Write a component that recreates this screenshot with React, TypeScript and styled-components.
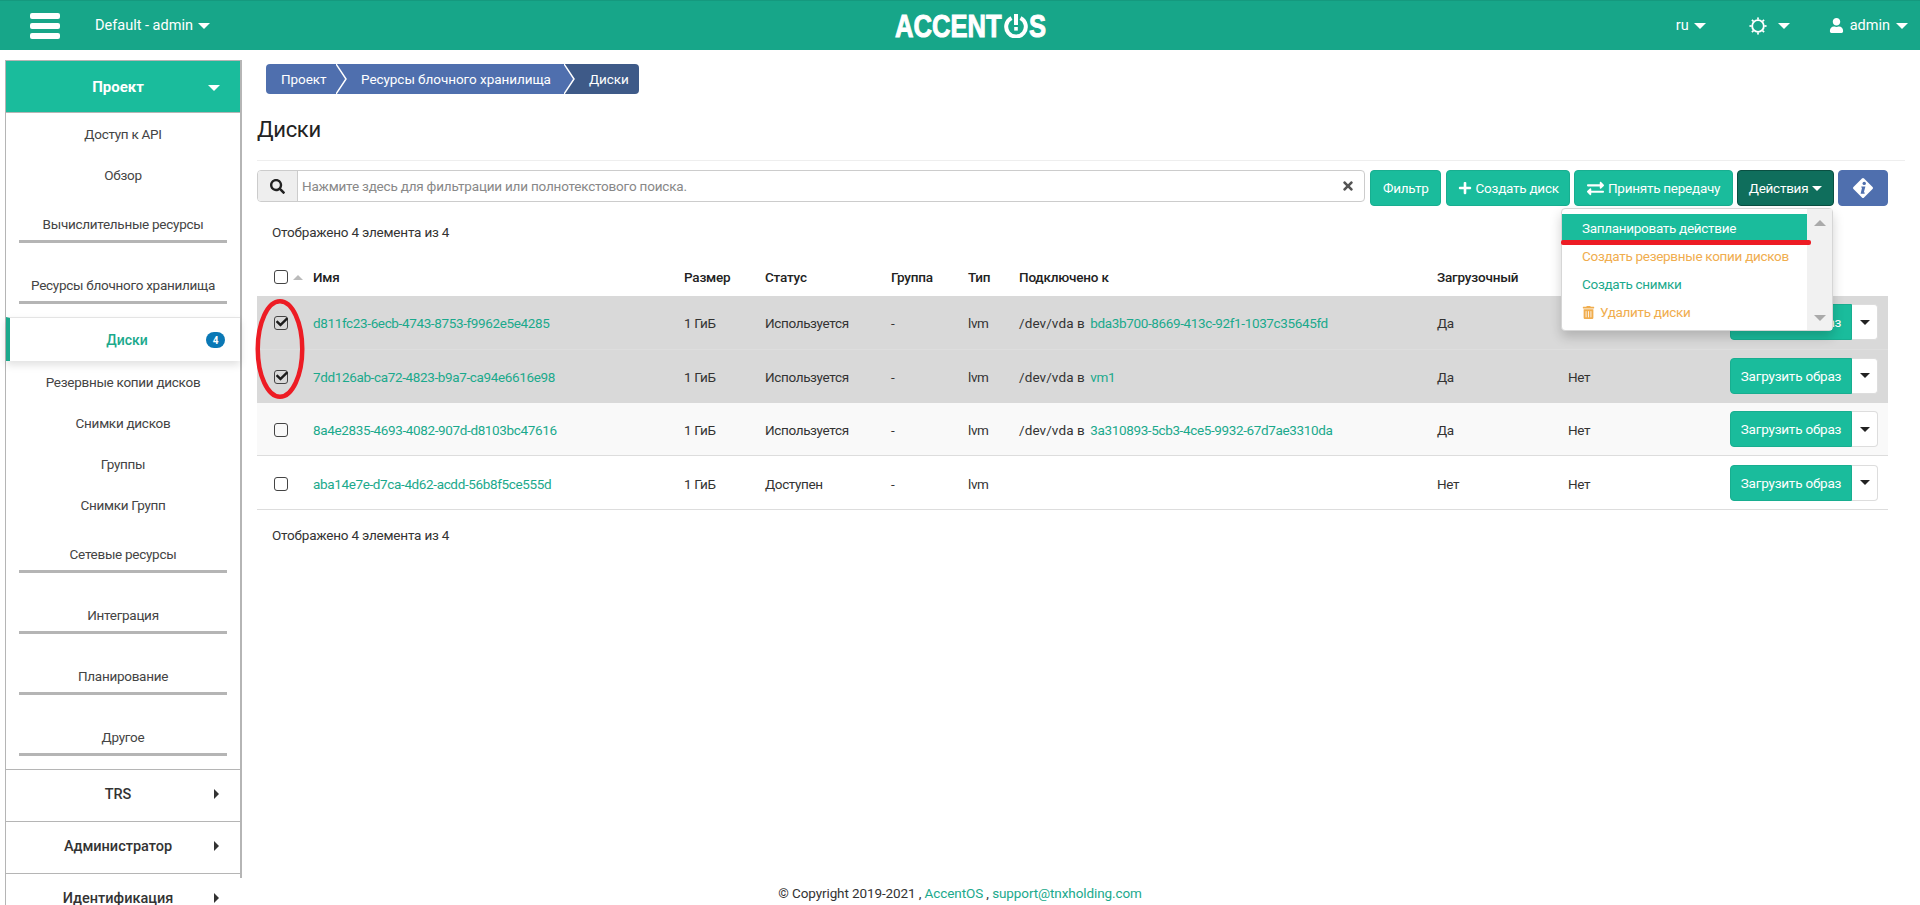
import React from "react";
import styled, { createGlobalStyle } from "styled-components";
import { FaSearch, FaTimes, FaPlus, FaExchangeAlt, FaTrashAlt, FaUser, FaCheck } from "react-icons/fa";

const GlobalStyle = createGlobalStyle`
  html, body {
    margin: 0;
    padding: 0;
    background: #fff;
  }
  body {
    font-family: Roboto, "Noto Sans", "Liberation Sans", sans-serif;
    font-size: 13.5px;
    letter-spacing: -0.2px;
    color: #333;
  }
  * {
    box-sizing: border-box;
  }
`;

const GREEN = "#1abc9c";
const HEADER_GREEN = "#17a689";
const LINK = "#1ba98c";

// --- шапка ---
const Page = styled.div`
  position: relative;
  width: 1920px;
  height: 905px;
  overflow: hidden;
  white-space: nowrap;
`;

const Topbar = styled.header`
  display: grid;
  grid-template-columns: 1fr auto 1fr;
  align-items: center;
  height: 50px;
  background: ${HEADER_GREEN};
  border-top: 1px solid #15997e;
  color: #fff;
`;

const TopLeft = styled.div`
  display: flex;
  align-items: center;
  padding-left: 30px;
  gap: 35px;
`;

const Burger = styled.div`
  display: flex;
  flex-direction: column;
  gap: 4px;
  width: 30px;
`;

const BurgerBar = styled.span`
  display: block;
  height: 6px;
  background: #fff;
  border-radius: 2px;
`;

const TopLink = styled.span`
  display: inline-flex;
  align-items: center;
  gap: 5px;
  font-size: 14.5px;
  letter-spacing: 0;
  color: #fff;
`;

const Caret = styled.span<{ $color?: string; $size?: number }>`
  display: inline-block;
  width: 0;
  height: 0;
  border-left: ${(p) => p.$size ?? 5}px solid transparent;
  border-right: ${(p) => p.$size ?? 5}px solid transparent;
  border-top: ${(p) => p.$size ?? 5}px solid ${(p) => p.$color ?? "#fff"};
`;

const Logo = styled.div`
  display: flex;
  align-items: center;
  width: 150px;
  margin-left: 20px;
  height: 24px;
`;

const LogoText = styled.span<{ $w: number }>`
  display: inline-block;
  flex: none;
  width: ${(p) => p.$w}px;
  font-family: "Liberation Sans", sans-serif;
  font-weight: 700;
  font-size: 32px;
  line-height: 24px;
  letter-spacing: 0;
  color: #fff;
  -webkit-text-stroke: 1px #fff;
  transform: scaleX(0.8);
  transform-origin: left center;
`;

const LogoRing = styled.span`
  display: inline-flex;
  justify-content: center;
  flex: none;
  width: 27px;
`;

const TopRight = styled.div`
  display: flex;
  align-items: center;
  justify-content: flex-end;
  padding-right: 12px;
`;

const TopRightItem = styled(TopLink)<{ $ml: number; $gap?: number }>`
  margin-left: ${(p) => p.$ml}px;
  gap: ${(p) => p.$gap ?? 5}px;
`;

// --- боковое меню ---
const Body = styled.div`
  display: flex;
  align-items: flex-start;
  padding-left: 5px;
`;

const Sidebar = styled.nav`
  flex: none;
  width: 237px;
  height: 818px;
  margin-top: 10px;
  border-right: 2px solid #b5b5b5;
`;

const SideInner = styled.div`
  width: 235px;
  border-left: 1px solid #b5b5b5;
  border-top: 1px solid #b5b5b5;
`;

const ProjectHead = styled.div`
  position: relative;
  display: flex;
  align-items: center;
  justify-content: center;
  height: 52px;
  padding-right: 10px;
  background: ${GREEN};
  border-bottom: 1px solid #b5b5b5;
  font-size: 15px;
  font-weight: 700;
  letter-spacing: 0;
  color: #fff;
`;

const HeadCaret = styled.span`
  position: absolute;
  right: 20px;
  top: 24px;
  line-height: 0;
`;

const SideItem = styled.div`
  display: flex;
  align-items: center;
  justify-content: center;
  height: 41px;
  letter-spacing: -0.28px;
  color: #444;
`;

const SideGroup = styled.div`
  height: 61px;
  padding: 19px 13px 0;
`;

const SideGroupLabel = styled.div`
  height: 29px;
  border-bottom: 3px solid #b5b5b5;
  text-align: center;
  letter-spacing: -0.28px;
  line-height: 20px;
  color: #444;
`;

const ActiveItem = styled.div`
  position: relative;
  display: flex;
  align-items: center;
  justify-content: center;
  height: 44px;
  padding-left: 4px;
  border-top: 1px solid #e4e4e4;
  border-left: 4px solid ${LINK};
  box-shadow: 0 4px 8px rgba(0, 0, 0, 0.12);
  font-size: 14px;
  font-weight: 500;
  letter-spacing: 0;
  color: ${LINK};
`;

const Badge = styled.span`
  position: absolute;
  right: 15px;
  top: 14px;
  display: flex;
  align-items: center;
  justify-content: center;
  width: 19px;
  height: 16px;
  border-radius: 8px;
  background: #0a78b5;
  color: #fff;
  font-size: 10px;
  font-weight: 700;
`;

const AccordionRow = styled.div`
  position: relative;
  display: flex;
  align-items: center;
  justify-content: center;
  height: 52px;
  padding: 0 10px 2px 0;
  border-top: 1px solid #b5b5b5;
  font-size: 14.5px;
  font-weight: 500;
  letter-spacing: 0;
  color: #333;
`;

const RowArrow = styled.span`
  position: absolute;
  right: 21px;
  top: 19px;
  width: 0;
  height: 0;
  border-top: 5px solid transparent;
  border-bottom: 5px solid transparent;
  border-left: 5px solid #333;
`;

// --- основная часть ---
const Main = styled.main`
  flex: 1;
  min-width: 0;
  padding: 14px 15px 0;
`;

const Crumbs = styled.div`
  display: flex;
  height: 30px;
  margin-left: 9px;
`;

const Crumb = styled.div<{ $w: number; $dark?: boolean; $first?: boolean }>`
  position: relative;
  display: flex;
  align-items: center;
  width: ${(p) => p.$w}px;
  padding-left: ${(p) => (p.$first ? 15 : 24)}px;
  background: ${(p) => (p.$dark ? "#3e5a88" : "#4f6fae")};
  border-radius: ${(p) => (p.$first ? "4px 0 0 4px" : p.$dark ? "0 4px 4px 0" : "0")};
  letter-spacing: -0.05px;
  color: #fff;
`;

const CrumbArrow = styled.svg`
  position: absolute;
  right: -10px;
  top: 0;
  z-index: 1;
`;

const PageTitle = styled.h1`
  margin: 0;
  height: 67px;
  padding-top: 20px;
  border-bottom: 1px solid #eee;
  font-size: 22px;
  font-weight: 400;
  letter-spacing: -0.3px;
  line-height: 32px;
  color: #222;
`;

const Toolbar = styled.div`
  display: flex;
  align-items: flex-start;
  width: 1631px;
  margin-top: 9px;
`;

const SearchBox = styled.div`
  display: flex;
  width: 1109px;
  height: 32px;
  border: 1px solid #ccc;
  border-radius: 4px;
  overflow: hidden;
`;

const SearchAddon = styled.span`
  display: flex;
  align-items: center;
  justify-content: center;
  flex: none;
  width: 40px;
  background: #eee;
  border-right: 1px solid #ccc;
  color: #222;
  font-size: 15px;
`;

const SearchInput = styled.input`
  flex: 1;
  min-width: 0;
  border: 0;
  outline: 0;
  padding: 0 4px;
  font-family: inherit;
  font-size: 13.5px;
  letter-spacing: -0.2px;
  &::placeholder {
    color: #888;
    opacity: 1;
  }
`;

const SearchClear = styled.span`
  display: flex;
  align-items: center;
  padding-right: 9px;
  color: #555;
  font-size: 14px;
`;

const Btn = styled.button<{ $w: number; $ml: number; $bg?: string; $border?: string }>`
  display: inline-flex;
  align-items: center;
  justify-content: center;
  gap: 4px;
  width: ${(p) => p.$w}px;
  height: 36px;
  margin-left: ${(p) => p.$ml}px;
  padding: 0;
  background: ${(p) => p.$bg ?? GREEN};
  border: 1px solid ${(p) => p.$border ?? "#18ae90"};
  border-radius: 4px;
  font-family: inherit;
  font-size: 13.5px;
  letter-spacing: -0.25px;
  color: #fff;
`;

const ActionsWrap = styled.div`
  position: relative;
`;

const Dropdown = styled.div`
  position: absolute;
  left: -172px;
  top: 38px;
  z-index: 5;
  display: flex;
  width: 272px;
  height: 123px;
  padding-top: 5px;
  background: #fff;
  border: 1px solid #d6d6d6;
  border-radius: 4px;
  box-shadow: 0 6px 12px rgba(0, 0, 0, 0.18);
`;

const DropList = styled.div`
  flex: 1;
  min-width: 0;
`;

const DropItem = styled.div<{ $color: string; $bg?: string }>`
  display: flex;
  align-items: center;
  gap: 5px;
  height: 28px;
  padding-left: 20px;
  background: ${(p) => p.$bg ?? "transparent"};
  letter-spacing: -0.3px;
  color: ${(p) => p.$color};
`;

const DropScroll = styled.div`
  display: flex;
  flex-direction: column;
  justify-content: space-between;
  align-items: center;
  flex: none;
  width: 25px;
  margin-top: -5px;
  padding: 11px 0 9px;
  background: #f1f1f1;
`;

const ScrollArrow = styled.span<{ $up?: boolean }>`
  width: 0;
  height: 0;
  border-left: 6px solid transparent;
  border-right: 6px solid transparent;
  ${(p) => (p.$up ? "border-bottom: 6px solid #aaa;" : "border-top: 6px solid #aaa;")}
`;

const RedMark = styled.span`
  position: absolute;
  left: -1px;
  top: 31px;
  width: 250px;
  height: 5px;
  border-radius: 2px;
  background: #ed1c24;
`;

const CountText = styled.div<{ $mt: number }>`
  margin: ${(p) => p.$mt}px 0 0 15px;
  line-height: 18px;
  color: #333;
`;

const TableWrap = styled.div`
  position: relative;
  width: 1631px;
  margin-top: 20px;
`;

const Table = styled.table`
  width: 1631px;
  border-collapse: collapse;
  table-layout: fixed;
`;

const Th = styled.th`
  height: 35px;
  padding: 0 8px 3px;
  text-align: left;
  font-size: 13.5px;
  font-weight: 500;
  color: #222;
`;

const Tr = styled.tr<{ $bg: string; $line: string }>`
  height: 53.3px;
  background: ${(p) => p.$bg};
  border-bottom: 1px solid ${(p) => p.$line};
`;

const Td = styled.td`
  padding: 2px 8px 0;
  letter-spacing: -0.35px;
  color: #333;
`;

const ActionTd = styled(Td)`
  padding: 0 10px 0 8px;
  letter-spacing: -0.2px;
`;

const DevicePath = styled.span`
  letter-spacing: 0.1px;
  margin-right: 2px;
`;

const RowLink = styled.a`
  color: ${LINK};
  letter-spacing: -0.36px;
  text-decoration: none;
`;

const FooterLink = styled.a`
  color: ${LINK};
  text-decoration: none;
`;

const CheckCell = styled.div`
  display: flex;
  align-items: center;
  gap: 5px;
  padding-left: 9px;
`;

const CheckBox = styled.span`
  position: relative;
  display: block;
  flex: none;
  width: 14px;
  height: 14px;
  border: 1.5px solid #444;
  border-radius: 3px;
`;

const CheckMark = styled.span`
  position: absolute;
  left: 1px;
  top: -1px;
  color: #1c1c1c;
  font-size: 12px;
  & svg {
    display: block;
  }
`;

const SortUp = styled.span`
  width: 0;
  height: 0;
  border-left: 5px solid transparent;
  border-right: 5px solid transparent;
  border-bottom: 5px solid #bbb;
`;

const ButtonGroup = styled.div`
  display: flex;
  justify-content: flex-end;
`;

const LoadBtn = styled.span`
  display: flex;
  align-items: center;
  justify-content: center;
  width: 122px;
  height: 36px;
  background: ${GREEN};
  border: 1px solid #18ae90;
  border-radius: 4px 0 0 4px;
  color: #fff;
`;

const LoadCaret = styled.span`
  display: flex;
  align-items: center;
  justify-content: center;
  width: 26px;
  height: 36px;
  background: #fff;
  border: 1px solid #ddd;
  border-left: 0;
  border-radius: 0 4px 4px 0;
`;

const Ellipse = styled.svg`
  position: absolute;
  left: -4px;
  top: 36px;
`;

const Footer = styled.footer`
  position: absolute;
  left: 0;
  right: 0;
  bottom: 2px;
  text-align: center;
  letter-spacing: -0.1px;
  line-height: 20px;
  color: #333;
`;

interface Disk {
  id: string;
  status: string;
  device?: string;
  host?: string;
  boot: string;
  selected?: boolean;
  bg: string;
  line: string;
}

const DISKS: Disk[] = [
  { id: "d811fc23-6ecb-4743-8753-f9962e5e4285", status: "Используется", device: "/dev/vda в ", host: "bda3b700-8669-413c-92f1-1037c35645fd", boot: "Да", selected: true, bg: "#d9d9d9", line: "#dedede" },
  { id: "7dd126ab-ca72-4823-b9a7-ca94e6616e98", status: "Используется", device: "/dev/vda в ", host: "vm1", boot: "Да", selected: true, bg: "#d9d9d9", line: "#d9d9d9" },
  { id: "8a4e2835-4693-4082-907d-d8103bc47616", status: "Используется", device: "/dev/vda в ", host: "3a310893-5cb3-4ce5-9932-67d7ae3310da", boot: "Да", bg: "#f9f9f9", line: "#ddd" },
  { id: "aba14e7e-d7ca-4d62-acdd-56b8f5ce555d", status: "Доступен", boot: "Нет", bg: "#fff", line: "#ddd" },
];

const COLUMNS = [48, 371, 81, 126, 77, 51, 418, 131, 130, 198];

const Check: React.FC<{ checked?: boolean }> = ({ checked }) => (
  <CheckBox>
    {checked && (
      <CheckMark>
        <FaCheck />
      </CheckMark>
    )}
  </CheckBox>
);

const Gear = () => (
  <svg width="18" height="18" viewBox="0 0 21 21" fill="none">
    <circle cx="10.5" cy="10.5" r="6.8" stroke="#fff" strokeWidth="2.2" />
    {[0, 45, 90, 135, 180, 225, 270, 315].map((a) => (
      <rect key={a} x="9.5" y="0.5" width="2" height="2.5" fill="#fff" transform={`rotate(${a} 10.5 10.5)`} />
    ))}
  </svg>
);

const InfoDiamond = () => (
  <svg width="24" height="24" viewBox="0 0 24 24">
    <rect x="4.5" y="4.5" width="15" height="15" rx="1.5" fill="#fff" transform="rotate(45 12 12)" />
    <circle cx="13.2" cy="7.4" r="1.7" fill="#4f6fae" />
    <path d="M10.4 10.4h4l-1.6 6.2h1.1l-.4 1.2h-3.9l1.5-6.2h-1z" fill="#4f6fae" />
  </svg>
);

const PowerO = () => (
  <svg width="26" height="24" viewBox="0 0 26 24" fill="none">
    <path d="M8.5 4a9.8 9.8 0 1 0 9 0" stroke="#fff" strokeWidth="4" />
    <rect x="11" y="0" width="4" height="11" fill="#fff" />
    <rect x="11.2" y="13" width="3.6" height="3.6" fill="#fff" />
  </svg>
);

const SegmentArrow = () => (
  <CrumbArrow width="11" height="30" viewBox="0 0 11 30">
    <path d="M0 0l10 15L0 30z" fill="#4f6fae" />
    <path d="M0 0l10 15L0 30" fill="none" stroke="#fff" strokeWidth="1.5" />
  </CrumbArrow>
);

const App: React.FC = () => (
  <Page>
    <GlobalStyle />
    <Topbar>
      <TopLeft>
        <Burger>
          <BurgerBar />
          <BurgerBar />
          <BurgerBar />
        </Burger>
        <TopLink>
          Default - admin <Caret $size={6} />
        </TopLink>
      </TopLeft>
      <Logo>
        <LogoText $w={107}>ACCENT</LogoText>
        <LogoRing>
          <PowerO />
        </LogoRing>
        <LogoText $w={16}>S</LogoText>
      </Logo>
      <TopRight>
        <TopRightItem $ml={0}>
          ru <Caret $size={6} />
        </TopRightItem>
        <TopRightItem $ml={43} $gap={11}>
          <Gear />
          <Caret $size={6} />
        </TopRightItem>
        <TopRightItem $ml={39} $gap={6}>
          <FaUser size={15} />
          admin <Caret $size={6} />
        </TopRightItem>
      </TopRight>
    </Topbar>
    <Body>
      <Sidebar>
        <SideInner>
          <ProjectHead>
            Проект
            <HeadCaret>
              <Caret $size={6} />
            </HeadCaret>
          </ProjectHead>
          <SideItem>Доступ к API</SideItem>
          <SideItem>Обзор</SideItem>
          <SideGroup>
            <SideGroupLabel>Вычислительные ресурсы</SideGroupLabel>
          </SideGroup>
          <SideGroup>
            <SideGroupLabel>Ресурсы блочного хранилища</SideGroupLabel>
          </SideGroup>
          <ActiveItem>
            Диски
            <Badge>4</Badge>
          </ActiveItem>
          <SideItem>Резервные копии дисков</SideItem>
          <SideItem>Снимки дисков</SideItem>
          <SideItem>Группы</SideItem>
          <SideItem>Снимки Групп</SideItem>
          <SideGroup>
            <SideGroupLabel>Сетевые ресурсы</SideGroupLabel>
          </SideGroup>
          <SideGroup>
            <SideGroupLabel>Интеграция</SideGroupLabel>
          </SideGroup>
          <SideGroup>
            <SideGroupLabel>Планирование</SideGroupLabel>
          </SideGroup>
          <SideGroup>
            <SideGroupLabel>Другое</SideGroupLabel>
          </SideGroup>
          <AccordionRow>
            TRS
            <RowArrow />
          </AccordionRow>
          <AccordionRow>
            Администратор
            <RowArrow />
          </AccordionRow>
          <AccordionRow>
            Идентификация
            <RowArrow />
          </AccordionRow>
        </SideInner>
      </Sidebar>
      <Main>
        <Crumbs>
          <Crumb $w={71} $first>
            Проект
            <SegmentArrow />
          </Crumb>
          <Crumb $w={228}>
            Ресурсы блочного хранилища
            <SegmentArrow />
          </Crumb>
          <Crumb $w={74} $dark>
            Диски
          </Crumb>
        </Crumbs>
        <PageTitle>Диски</PageTitle>
        <Toolbar>
          <SearchBox>
            <SearchAddon>
              <FaSearch />
            </SearchAddon>
            <SearchInput placeholder="Нажмите здесь для фильтрации или полнотекстового поиска." readOnly />
            <SearchClear>
              <FaTimes />
            </SearchClear>
          </SearchBox>
          <Btn $w={71} $ml={5}>
            Фильтр
          </Btn>
          <Btn $w={124} $ml={5}>
            <FaPlus size={14} /> Создать диск
          </Btn>
          <Btn $w={159} $ml={4}>
            <FaExchangeAlt size={17} /> Принять передачу
          </Btn>
          <ActionsWrap>
            <Btn $w={97} $ml={4} $bg="#0f6e5c" $border="#0a4f42">
              Действия <Caret />
            </Btn>
            <Dropdown>
              <DropList>
                <DropItem $color="#fff" $bg={GREEN}>
                  Запланировать действие
                </DropItem>
                <DropItem $color="#f0ad4e">Создать резервные копии дисков</DropItem>
                <DropItem $color={LINK}>Создать снимки</DropItem>
                <DropItem $color="#f0ad4e">
                  <FaTrashAlt size={13} /> Удалить диски
                </DropItem>
              </DropList>
              <DropScroll>
                <ScrollArrow $up />
                <ScrollArrow />
              </DropScroll>
              <RedMark />
            </Dropdown>
          </ActionsWrap>
          <Btn $w={50} $ml={4} $bg="#4f6fae" $border="#4f6fae">
            <InfoDiamond />
          </Btn>
        </Toolbar>
        <CountText $mt={17}>Отображено 4 элемента из 4</CountText>
        <TableWrap>
          <Table>
            <colgroup>
              {COLUMNS.map((w, i) => (
                <col key={i} style={{ width: w }} />
              ))}
            </colgroup>
            <thead>
              <tr>
                <Th>
                  <CheckCell>
                    <Check />
                    <SortUp />
                  </CheckCell>
                </Th>
                <Th>Имя</Th>
                <Th>Размер</Th>
                <Th>Статус</Th>
                <Th>Группа</Th>
                <Th>Тип</Th>
                <Th>Подключено к</Th>
                <Th>Загрузочный</Th>
                <Th />
                <Th />
              </tr>
            </thead>
            <tbody>
              {DISKS.map((d) => (
                <Tr key={d.id} $bg={d.bg} $line={d.line}>
                  <Td>
                    <CheckCell>
                      <Check checked={d.selected} />
                    </CheckCell>
                  </Td>
                  <Td>
                    <RowLink>{d.id}</RowLink>
                  </Td>
                  <Td>1 ГиБ</Td>
                  <Td>{d.status}</Td>
                  <Td>-</Td>
                  <Td>lvm</Td>
                  <Td>
                    {d.device && <DevicePath>{d.device}</DevicePath>}
                    {d.host && <RowLink>{d.host}</RowLink>}
                  </Td>
                  <Td>{d.boot}</Td>
                  <Td>Нет</Td>
                  <ActionTd>
                    <ButtonGroup>
                      <LoadBtn>Загрузить образ</LoadBtn>
                      <LoadCaret>
                        <Caret $color="#222" />
                      </LoadCaret>
                    </ButtonGroup>
                  </ActionTd>
                </Tr>
              ))}
            </tbody>
          </Table>
          <Ellipse width="54" height="104" viewBox="0 0 54 104">
            <ellipse cx="27" cy="52" rx="22.25" ry="47.75" fill="none" stroke="#ed1c24" strokeWidth="4.5" />
          </Ellipse>
        </TableWrap>
        <CountText $mt={16}>Отображено 4 элемента из 4</CountText>
      </Main>
    </Body>
    <Footer>
      © Copyright 2019-2021 , <FooterLink>AccentOS</FooterLink> , <FooterLink>support@tnxholding.com</FooterLink>
    </Footer>
  </Page>
);

export default App;
